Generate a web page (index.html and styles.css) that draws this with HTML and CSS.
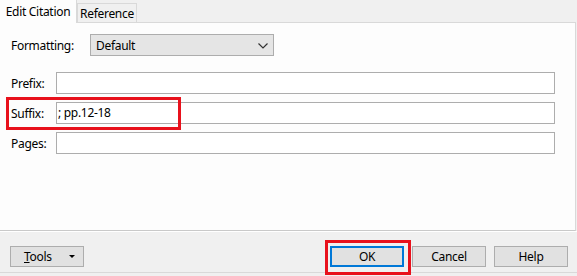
FILE: index.html
```html
<!DOCTYPE html>
<html>

<head>
    <meta name="viewport" content="width=device-width, minimum-scale=1">
    <title>Edit Citation</title>
    <link rel="stylesheet" href="styles.css">
</head>

<body>
    <div class="dialog">
        <!-- tab strip -->
        <div class="tabbar" role="tablist">
            <button class="tab tab-active" role="tab" aria-selected="true">Edit Citation</button>
            <button class="tab" role="tab" aria-selected="false">Reference</button>
        </div>

        <div class="panel" role="tabpanel">
            <div class="row-format">
                <label class="label-format">Formatting:</label>
                <div class="select">
                    <span>Default</span>
                    <svg class="chevron" width="10" height="6" viewBox="0 0 10 6">
                        <path d="M0.5 0.5 L5 5 L9.5 0.5" fill="none" stroke="#333" stroke-width="1.2"/>
                    </svg>
                </div>
            </div>

            <div class="fields">
                <div class="field">
                    <label>Prefix:</label>
                    <div class="input"></div>
                </div>
                <div class="field">
                    <label>Suffix:</label>
                    <div class="input">; pp.12-18</div>
                    <span class="mark mark-suffix"></span>
                </div>
                <div class="field">
                    <label>Pages:</label>
                    <div class="input"></div>
                </div>
            </div>
        </div>

        <div class="footer">
            <button class="btn btn-tools"><span><u>T</u>ools</span><span class="caret"></span></button>
            <div class="footer-right">
                <button class="btn btn-default">OK<span class="mark mark-ok"></span></button>
                <button class="btn">Cancel</button>
                <button class="btn">Help</button>
            </div>
        </div>
    </div>
</body>

</html>
```

FILE: styles.css
```css
:root {
    --face: #f0f0f0;
    --panel: #fdfdfd;
    --line: #d9d9d9;
    --field-border: #adadad;
    --button: #e1e1e1;
    --accent: #0078d7;
    --mark: #e8111c;
}

* {
    box-sizing: border-box;
    padding: 0;
    margin: 0;
}

body {
    background: var(--face);
    color: #000;
    font-family: "Noto Sans", "Open Sans", sans-serif;
    font-size: 12px;
    letter-spacing: -0.3px;
}

.dialog {
    width: 577px;
    height: 276px;
}

.tabbar {
    display: flex;
    align-items: flex-end;
    height: 22px;
}

.tab {
    font: inherit;
    letter-spacing: inherit;
    color: #000;
    background: var(--face);
    border: 1px solid var(--line);
    border-bottom: none;
    height: 19px;
    width: 60px;
    line-height: 17px;
    cursor: pointer;
}

.tab-active {
    position: relative;
    z-index: 1;
    background: var(--panel);
    border-top: none;
    border-left: none;
    width: 77px;
    height: 23px;
    margin-bottom: -1px;
    line-height: 20px;
}

.panel {
    width: 576px;
    height: 209px;
    background: var(--panel);
    border-top: 1px solid var(--line);
    border-right: 1px solid var(--line);
    border-bottom: 1px solid #c9c9c9;
    padding: 11px 20px 0 11px;
}

.row-format {
    display: flex;
    align-items: center;
    height: 22px;
}

.label-format {
    width: 79px;
}

.select {
    display: flex;
    align-items: center;
    justify-content: space-between;
    width: 184px;
    height: 22px;
    background: #e5e5e5;
    border: 1px solid var(--field-border);
    padding: 0 5px 0 5px;
}

.chevron {
    margin-top: 1px;
}

.fields {
    display: flex;
    flex-direction: column;
    gap: 8px;
    margin-top: 16px;
}

.field {
    position: relative;
    display: flex;
    align-items: center;
}

.field label {
    width: 45px;
}

.input {
    flex: 1;
    height: 22px;
    line-height: 20px;
    background: #fff;
    border: 1px solid var(--field-border);
    padding-left: 1px;
}

/* red annotation boxes drawn over the dialog */
.mark {
    position: absolute;
    border: 3px solid var(--mark);
    pointer-events: none;
}

.mark-suffix {
    left: -5px;
    top: -5px;
    width: 175px;
    height: 33px;
}

.mark-ok {
    left: -7px;
    top: -8px;
    width: 86px;
    height: 35px;
}

.footer {
    display: flex;
    justify-content: space-between;
    align-items: flex-start;
    height: 42px;
    border-top: 1px solid #fff;
    border-bottom: 1px solid var(--line);
    padding: 14px 9px 0 10px;
}

.footer-right {
    display: flex;
    gap: 8px;
}

.btn {
    position: relative;
    font: inherit;
    letter-spacing: inherit;
    color: #000;
    width: 74px;
    height: 21px;
    background: var(--button);
    border: 1px solid var(--field-border);
    cursor: pointer;
}

.btn-default {
    border: 2px solid var(--accent);
}

.btn-tools {
    display: flex;
    align-items: center;
    justify-content: space-between;
    padding: 0 8px 0 13px;
}

.caret {
    width: 0;
    height: 0;
    border-left: 3px solid transparent;
    border-right: 3px solid transparent;
    border-top: 3px solid #000;
}
```
